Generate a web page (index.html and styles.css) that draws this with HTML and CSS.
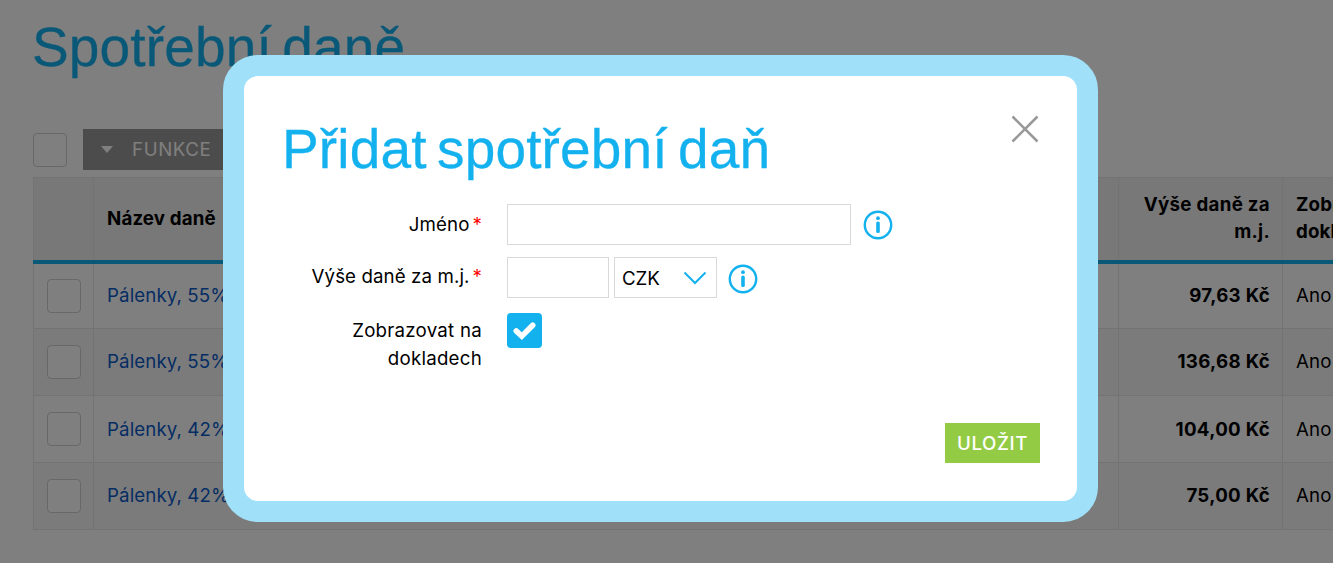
FILE: index.html
```html
<!DOCTYPE html>
<html lang="cs">
<head>
    <meta charset="UTF-8">
    <meta name="viewport" content="width=device-width, initial-scale=1.0">
    <title>Spotřební daně</title>
    <link rel="stylesheet" href="styles.css">
</head>
<body>
    <main class="page">
        <h1 class="page-title">Spotřební daně</h1>

        <div class="toolbar">
            <span class="checkbox"></span>
            <button type="button" class="functions"><span class="arrow"></span>FUNKCE</button>
        </div>

        <table class="taxes">
            <colgroup>
                <col class="col-check">
                <col class="col-name">
                <col class="col-amount">
                <col class="col-show">
            </colgroup>
            <thead>
                <tr>
                    <th></th>
                    <th>Název daně</th>
                    <th class="amount">Výše daně za m.j.</th>
                    <th>Zobrazovat na dokladech</th>
                </tr>
            </thead>
            <tbody>
                <tr>
                    <td class="check"><span class="checkbox"></span></td>
                    <td><a href="#">Pálenky, 55%</a></td>
                    <td class="amount">97,63 Kč</td>
                    <td>Ano</td>
                </tr>
                <tr>
                    <td class="check"><span class="checkbox"></span></td>
                    <td><a href="#">Pálenky, 55%</a></td>
                    <td class="amount">136,68 Kč</td>
                    <td>Ano</td>
                </tr>
                <tr>
                    <td class="check"><span class="checkbox"></span></td>
                    <td><a href="#">Pálenky, 42%</a></td>
                    <td class="amount">104,00 Kč</td>
                    <td>Ano</td>
                </tr>
                <tr>
                    <td class="check"><span class="checkbox"></span></td>
                    <td><a href="#">Pálenky, 42%</a></td>
                    <td class="amount">75,00 Kč</td>
                    <td>Ano</td>
                </tr>
            </tbody>
        </table>
    </main>

    <div class="overlay">
        <div class="modal">
            <div class="modal-header">
                <h2>Přidat spotřební daň</h2>
                <button type="button" class="close" aria-label="Zavřít">
                    <svg width="28" height="28" viewBox="0 0 28 28"><path d="M1.5 1.5L26.5 26.5M26.5 1.5L1.5 26.5"/></svg>
                </button>
            </div>

            <form class="tax-form">
                <div class="form-group">
                    <label for="name">Jméno<span class="required">*</span></label>
                    <input type="text" id="name" name="name">
                    <svg class="info" viewBox="0 0 30 30"><circle class="ring" cx="15" cy="15" r="13.2"/><circle cx="15" cy="8.2" r="1.9"/><rect x="13.2" y="11.5" width="3.6" height="11.6" rx="1.6"/></svg>
                </div>
                <div class="form-group">
                    <label for="amount">Výše daně za m.j.<span class="required">*</span></label>
                    <input type="text" id="amount" name="amount">
                    <div class="currency">
                        CZK
                        <svg width="24" height="14" viewBox="0 0 24 14"><path d="M1.5 1.5L12 12L22.5 1.5"/></svg>
                    </div>
                    <svg class="info" viewBox="0 0 30 30"><circle class="ring" cx="15" cy="15" r="13.2"/><circle cx="15" cy="8.2" r="1.9"/><rect x="13.2" y="11.5" width="3.6" height="11.6" rx="1.6"/></svg>
                </div>
                <div class="form-group">
                    <label>Zobrazovat na dokladech</label>
                    <span class="checked">
                        <svg width="35" height="35" viewBox="0 0 35 35"><path d="M9.3 18L14.8 23.2L25.7 12.3"/></svg>
                    </span>
                </div>
                <button type="submit" class="save">ULOŽIT</button>
            </form>
        </div>
    </div>
</body>
</html>
```

FILE: styles.css
```css
* {
    box-sizing: border-box;
}

body {
    margin: 0;
    background-color: #fff;
    color: #000;
    font-family: Inter, sans-serif;
    font-size: 18.7px;
    letter-spacing: 0.1px;
    overflow: hidden;
}

button,
input {
    font-family: inherit;
    font-size: inherit;
}

h1,
h2 {
    margin: 0;
    font-family: "Liberation Sans", Arial, sans-serif;
    font-size: 55px;
    font-weight: normal;
    line-height: 64px;
    letter-spacing: 0.15px;
    word-spacing: -5px;
    color: #14b1ef;
    -webkit-text-stroke: 0.3px #14b1ef;
    white-space: nowrap;
}

.page {
    padding: 15px 0 0 33px;
    overflow: hidden;
}

.page-title {
    margin-left: -1px;
}

.toolbar {
    display: flex;
    align-items: center;
    gap: 16px;
    height: 41px;
    margin: 50px 0 7px;
}

.checkbox {
    display: block;
    width: 34px;
    height: 34px;
    border: 1px solid #d0d0d0;
    border-radius: 4px;
    background-color: #fff;
}

.functions {
    display: flex;
    align-items: center;
    gap: 19px;
    width: 180px;
    height: 41px;
    padding: 0 18px;
    border: none;
    background-color: #999;
    color: #fff;
    letter-spacing: 0.6px;
}

.arrow {
    border: 6.5px solid transparent;
    border-top: 7px solid #fff;
    border-bottom: 0;
}

.taxes {
    width: 1400px;
    table-layout: fixed;
    border-collapse: collapse;
}

.col-check {
    width: 60px;
}

.col-name {
    width: 1025px;
}

.col-amount {
    width: 164px;
}

.taxes th,
.taxes td {
    padding: 0 12px 0 13px;
    border: 1px solid #e6e6e6;
    text-align: left;
}

.taxes th {
    height: 84px;
    padding-bottom: 1px;
    border-bottom: 4px solid #14b1ef;
    background-color: #f0f0f0;
    line-height: 27px;
    font-weight: 700;
    letter-spacing: 0.15px;
}

.taxes td {
    height: 67px;
}

.taxes tbody tr:nth-child(even) {
    background-color: #f6f6f6;
}

.taxes tbody tr:nth-child(even) td:not(.check) {
    padding-bottom: 2px;
}

.taxes .amount {
    text-align: right;
    font-weight: 700;
    letter-spacing: 0.3px;
}

.taxes th:last-child {
    padding-right: 0;
}

.taxes a {
    color: #0a5ac8;
    text-decoration: none;
}

.overlay {
    position: fixed;
    inset: 0;
    padding: 55px 0 0 223px;
    background-color: rgba(0, 0, 0, 0.5);
}

.modal {
    width: 875px;
    height: 467px;
    padding: 41px 37px 37px 38px;
    border: 21px solid #a0e0f9;
    border-radius: 35px;
    background-color: #fff;
}

.modal-header {
    display: flex;
    justify-content: space-between;
    align-items: flex-start;
}

.close {
    display: flex;
    margin: -2px 1px 0 0;
    padding: 0;
    border: none;
    background: none;
}

.close path {
    fill: none;
    stroke: #999;
    stroke-width: 2.6;
}

.tax-form {
    display: flex;
    flex-direction: column;
    margin-top: 23px;
}

.form-group {
    display: flex;
    align-items: flex-start;
    margin-bottom: 12px;
}

label {
    width: 200px;
    margin-right: 25px;
    padding-top: 6px;
    text-align: right;
    line-height: 28px;
}

.form-group:first-child label {
    padding-top: 7px;
}

.form-group:last-of-type label {
    padding-left: 50px;
    padding-top: 7px;
    letter-spacing: 0.25px;
}

.required {
    margin-left: 3px;
    color: #f00;
}

input,
.currency {
    height: 41px;
    border: 1px solid #d9d9d9;
    background-color: #fff;
}

#name {
    width: 344px;
}

#amount {
    width: 102px;
}

.currency {
    display: flex;
    align-items: center;
    justify-content: space-between;
    width: 103px;
    margin-left: 5px;
    padding: 1px 9px 0 7px;
    letter-spacing: -0.1px;
}

.currency path {
    fill: none;
    stroke: #14b1ef;
    stroke-width: 2;
}

.info {
    width: 30px;
    height: 30px;
    margin: 6px 0 0 12px;
    fill: #14b1ef;
}

.currency + .info {
    margin: 7px 0 0 11px;
}

.info .ring {
    fill: none;
    stroke: #14b1ef;
    stroke-width: 2.4;
}

.checked {
    display: flex;
    margin-top: 3px;
    border-radius: 4px;
    background-color: #14b1ef;
}

.checked path {
    fill: none;
    stroke: #fff;
    stroke-width: 5.6;
    stroke-linecap: round;
}

.save {
    align-self: flex-end;
    width: 95px;
    height: 40px;
    margin-top: 38px;
    padding: 0;
    border: none;
    background-color: #93cb45;
    color: #fff;
    font-weight: 500;
    letter-spacing: 0.6px;
}
```
